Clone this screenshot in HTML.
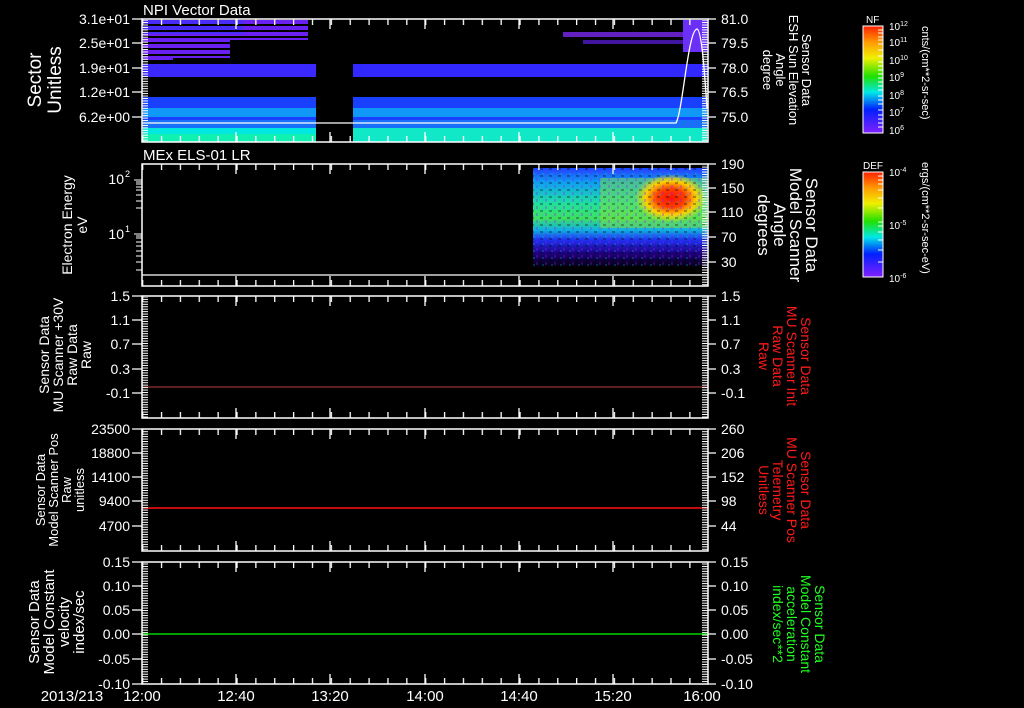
<!DOCTYPE html>
<html><head><meta charset="utf-8"><style>
html,body{margin:0;padding:0;background:#000;}
svg{display:block}
text{font-family:"Liberation Sans",sans-serif;fill:#fff}
.r text{fill:#ff1a1a}
.g text{fill:#20ff20}
</style></head><body>
<svg width="1024" height="708" viewBox="0 0 1024 708" xmlns="http://www.w3.org/2000/svg">
<defs>
<linearGradient id="rb" x1="0" y1="0" x2="0" y2="1">
<stop offset="0" stop-color="#ff2000"/><stop offset="0.15" stop-color="#ff9900"/><stop offset="0.3" stop-color="#f0f000"/><stop offset="0.47" stop-color="#20e000"/><stop offset="0.62" stop-color="#00e8e8"/><stop offset="0.78" stop-color="#0020ff"/><stop offset="1" stop-color="#8020ff"/>
</linearGradient>
<linearGradient id="p2" x1="0" y1="0" x2="0" y2="1">
<stop offset="0" stop-color="#2040ff"/><stop offset="0.15" stop-color="#10a0f0"/><stop offset="0.35" stop-color="#20e0a0"/><stop offset="0.5" stop-color="#40e060"/><stop offset="0.62" stop-color="#10b0e0"/><stop offset="0.72" stop-color="#2030f0"/><stop offset="0.85" stop-color="#200080"/><stop offset="1" stop-color="#000"/>
</linearGradient>
<radialGradient id="hot" cx="0.5" cy="0.5" r="0.5">
<stop offset="0" stop-color="#ff1000"/><stop offset="0.4" stop-color="#ff4000"/><stop offset="0.7" stop-color="#ffd000"/><stop offset="1" stop-color="#ffe000" stop-opacity="0"/>
</radialGradient>
<pattern id="yt" x="0" y="0" width="12" height="2.45" patternUnits="userSpaceOnUse"><rect x="0" y="0" width="12" height="1" fill="#fff"/></pattern>
<pattern id="xt" x="142" y="0" width="18.87" height="10" patternUnits="userSpaceOnUse"><rect x="0" y="0" width="1.3" height="10" fill="#fff"/></pattern>
<pattern id="noise" x="0" y="0" width="9" height="7" patternUnits="userSpaceOnUse"><rect x="0" y="0" width="3" height="2" fill="#000" opacity="0.3"/><rect x="5" y="3" width="2" height="3" fill="#8020ff" opacity="0.3"/><rect x="2" y="5" width="2" height="2" fill="#00c0ff" opacity="0.25"/></pattern>
<pattern id="stripe" x="0" y="20" width="10" height="6" patternUnits="userSpaceOnUse"><rect x="0" y="4" width="10" height="2" fill="#000"/></pattern>
</defs>

<!-- Panel 1 spectrogram -->
<g>
<rect x="143" y="20" width="165" height="38" fill="#6a20f0"/>
<rect x="143" y="20" width="100" height="14" fill="#4a2cf8"/>
<rect x="143" y="20" width="165" height="38" fill="url(#stripe)"/>
<rect x="230" y="40" width="80" height="22" fill="#000"/>
<rect x="143" y="56" width="30" height="4" fill="#6a20f0"/>
<rect x="563" y="32" width="120" height="5" fill="#7a28f0" opacity="0.8"/>
<rect x="583" y="40" width="100" height="4" fill="#5a20e0" opacity="0.7"/>
<rect x="683" y="20" width="24" height="32" fill="#6a30f8"/>
<rect x="143" y="64" width="173" height="13" fill="#3a28ff"/>
<rect x="353" y="64" width="354" height="13" fill="#3028ff"/>
<rect x="143" y="97" width="173" height="45" fill="#1a40ff"/>
<rect x="353" y="97" width="354" height="45" fill="#1a40ff"/>
<rect x="143" y="108" width="173" height="9" fill="#1098f8"/>
<rect x="353" y="108" width="354" height="9" fill="#1098f8"/>
<rect x="143" y="120" width="173" height="8" fill="#1870f8"/>
<rect x="353" y="120" width="354" height="8" fill="#1870f8"/>
<rect x="143" y="128" width="173" height="14" fill="#00e8e0"/>
<rect x="353" y="128" width="354" height="14" fill="#10e8c8"/>
<rect x="143" y="134" width="173" height="8" fill="#10f0b0"/>
<path d="M142 123 L676 123 C683 110 688 30 697 29 C702 30 705 80 707 108" stroke="#fff" stroke-width="1.3" fill="none"/>
</g>

<!-- Panel 2 spectrogram -->
<g>
<rect x="533" y="168" width="174" height="100" fill="url(#p2)"/>
<rect x="600" y="178" width="107" height="50" fill="#80e040" opacity="0.5"/>
<rect x="635" y="174" width="72" height="48" fill="url(#hot)"/>
<rect x="533" y="168" width="174" height="100" fill="url(#noise)"/>
<line x1="142" y1="275" x2="708" y2="275" stroke="#fff" stroke-width="1.3"/>
</g>

<!-- Data lines -->
<line x1="142" y1="387" x2="708" y2="387" stroke="#c04040" stroke-width="1"/>
<line x1="142" y1="508" x2="708" y2="508" stroke="#ff1010" stroke-width="1.5"/>
<line x1="142" y1="634" x2="708" y2="634" stroke="#00ff00" stroke-width="1.3"/>

<!-- Panel frames and ticks -->
<g fill="none" stroke="#fff" stroke-width="1.5">
<rect x="142" y="19" width="566" height="123"/>
<rect x="142" y="164" width="566" height="122"/>
<rect x="142" y="296" width="566" height="122"/>
<rect x="142" y="429" width="566" height="122"/>
<rect x="142" y="562" width="566" height="122"/>
</g>
<rect x="142" y="20" width="6" height="122" fill="url(#yt)"/>
<rect x="702" y="20" width="6" height="122" fill="url(#yt)"/>
<rect x="702" y="165" width="6" height="121" fill="url(#yt)"/>
<rect x="142" y="297" width="6" height="121" fill="url(#yt)"/>
<rect x="702" y="297" width="6" height="121" fill="url(#yt)"/>
<rect x="142" y="430" width="6" height="121" fill="url(#yt)"/>
<rect x="702" y="430" width="6" height="121" fill="url(#yt)"/>
<rect x="142" y="563" width="6" height="121" fill="url(#yt)"/>
<rect x="702" y="563" width="6" height="121" fill="url(#yt)"/>
<g stroke="#fff" stroke-width="1">
<path d="M134 180h8M136 182h6M136 184h6M136 187h6M136 190h6M136 195h6M136 201h6M136 208h6M134 234h8M136 236h6M136 238h6M136 242h6M136 246h6M136 251h6M136 256h6M136 262h6M136 270h6"/>
</g>
<g>
<rect x="142" y="19" width="566" height="6" fill="url(#xt)"/><rect x="142" y="136" width="566" height="6" fill="url(#xt)"/>
<rect x="142" y="164" width="566" height="6" fill="url(#xt)"/><rect x="142" y="280" width="566" height="6" fill="url(#xt)"/>
<rect x="142" y="296" width="566" height="6" fill="url(#xt)"/><rect x="142" y="412" width="566" height="6" fill="url(#xt)"/>
<rect x="142" y="429" width="566" height="6" fill="url(#xt)"/><rect x="142" y="545" width="566" height="6" fill="url(#xt)"/>
<rect x="142" y="562" width="566" height="6" fill="url(#xt)"/><rect x="142" y="678" width="566" height="6" fill="url(#xt)"/>
</g>
<g stroke="#fff" stroke-width="1.3">
<path d="M236 19v10M330 19v10M425 19v10M519 19v10M613 19v10M236 142v-10M330 142v-10M425 142v-10M519 142v-10M613 142v-10
M236 164v10M330 164v10M425 164v10M519 164v10M613 164v10M236 286v-10M330 286v-10M425 286v-10M519 286v-10M613 286v-10
M236 296v10M330 296v10M425 296v10M519 296v10M613 296v10M236 418v-10M330 418v-10M425 418v-10M519 418v-10M613 418v-10
M236 429v10M330 429v10M425 429v10M519 429v10M613 429v10M236 551v-10M330 551v-10M425 551v-10M519 551v-10M613 551v-10
M236 562v10M330 562v10M425 562v10M519 562v10M613 562v10M236 684v-10M330 684v-10M425 684v-10M519 684v-10M613 684v-10
M132 19h10M132 43h10M132 68h10M132 92h10M132 117h10M708 19h8M708 43h8M708 68h8M708 92h8M708 117h8
M708 164h8M708 188h8M708 212h8M708 237h8M708 262h8
M132 296h10M132 320h10M132 344h10M132 369h10M132 393h10M708 296h8M708 320h8M708 344h8M708 369h8M708 393h8
M132 429h10M132 453h10M132 477h10M132 501h10M132 526h10M708 429h8M708 453h8M708 477h8M708 501h8M708 526h8
M132 562h10M132 586h10M132 610h10M132 634h10M132 659h10M132 684h10M708 562h8M708 586h8M708 610h8M708 634h8M708 659h8M708 684h8"/>
</g>

<text x="143" y="15" font-size="15">NPI Vector Data</text>
<text x="143" y="160" font-size="15">MEx ELS-01 LR</text>

<g font-size="14" text-anchor="end">
<text x="130" y="24">3.1e+01</text><text x="130" y="48">2.5e+01</text><text x="130" y="73">1.9e+01</text><text x="130" y="97">1.2e+01</text><text x="130" y="122">6.2e+00</text>
<text x="124" y="184">10</text><text x="130" y="177" font-size="9">2</text>
<text x="124" y="239">10</text><text x="130" y="232" font-size="9">1</text>
<text x="130" y="301">1.5</text><text x="130" y="325">1.1</text><text x="130" y="349">0.7</text><text x="130" y="374">0.3</text><text x="130" y="398">-0.1</text>
<text x="130" y="434">23500</text><text x="130" y="458">18800</text><text x="130" y="482">14100</text><text x="130" y="506">9400</text><text x="130" y="531">4700</text>
<text x="130" y="567">0.15</text><text x="130" y="591">0.10</text><text x="130" y="615">0.05</text><text x="130" y="639">0.00</text><text x="130" y="664">-0.05</text><text x="130" y="689">-0.10</text>
</g>
<g font-size="14">
<text x="721" y="24">81.0</text><text x="721" y="48">79.5</text><text x="721" y="73">78.0</text><text x="721" y="97">76.5</text><text x="721" y="122">75.0</text>
<text x="721" y="169">190</text><text x="721" y="193">150</text><text x="721" y="217">110</text><text x="721" y="242">70</text><text x="721" y="267">30</text>
<text x="721" y="301">1.5</text><text x="721" y="325">1.1</text><text x="721" y="349">0.7</text><text x="721" y="374">0.3</text><text x="721" y="398">-0.1</text>
<text x="721" y="434">260</text><text x="721" y="458">206</text><text x="721" y="482">152</text><text x="721" y="506">98</text><text x="721" y="531">44</text>
<text x="721" y="567">0.15</text><text x="721" y="591">0.10</text><text x="721" y="615">0.05</text><text x="721" y="639">0.00</text><text x="721" y="664">-0.05</text><text x="721" y="689">-0.10</text>
</g>

<g font-size="15" text-anchor="middle">
<text x="72" y="701">2013/213</text>
<text x="142" y="701">12:00</text><text x="236" y="701">12:40</text><text x="330" y="701">13:20</text><text x="425" y="701">14:00</text><text x="519" y="701">14:40</text><text x="613" y="701">15:20</text><text x="702" y="701">16:00</text>
</g>

<g text-anchor="middle">
<g transform="translate(44,80) rotate(-90)" font-size="19"><text x="0" y="-3">Sector</text><text x="0" y="17">Unitless</text></g>
<g transform="translate(72,225) rotate(-90)" font-size="14"><text x="0" y="0">Electron Energy</text><text x="0" y="15">eV</text></g>
<g transform="translate(63,355) rotate(-90)" font-size="14"><text x="0" y="-14">Sensor Data</text><text x="0" y="0">MU Scanner +30V</text><text x="0" y="14">Raw Data</text><text x="0" y="28">Raw</text></g>
<g transform="translate(59,490) rotate(-90)" font-size="13"><text x="0" y="-14">Sensor Data</text><text x="0" y="-1">Model Scanner Pos</text><text x="0" y="12">Raw</text><text x="0" y="25">unitless</text></g>
<g transform="translate(54,622) rotate(-90)" font-size="15"><text x="0" y="-15">Sensor Data</text><text x="0" y="0">Model Constant</text><text x="0" y="15">velocity</text><text x="0" y="30">index/sec</text></g>
</g>
<g text-anchor="middle">
<g transform="translate(790,70) rotate(90)" font-size="13"><text x="0" y="-12">Sensor Data</text><text x="0" y="1">ESH Sun Elevation</text><text x="0" y="14">Angle</text><text x="0" y="27">degree</text></g>
<g transform="translate(790,225) rotate(90)" font-size="17"><text x="0" y="-16">Sensor Data</text><text x="0" y="0">Model Scanner</text><text x="0" y="16">Angle</text><text x="0" y="32">degrees</text></g>
<g class="r" transform="translate(784,356) rotate(90)" font-size="14"><text x="0" y="-17">Sensor Data</text><text x="0" y="-3">MU Scanner Init</text><text x="0" y="11">Raw Data</text><text x="0" y="25">Raw</text></g>
<g class="r" transform="translate(784,490) rotate(90)" font-size="14"><text x="0" y="-17">Sensor Data</text><text x="0" y="-3">MU Scanner Pos</text><text x="0" y="11">Telemetry</text><text x="0" y="25">Unitless</text></g>
<g class="g" transform="translate(798,624) rotate(90)" font-size="14"><text x="0" y="-17">Sensor Data</text><text x="0" y="-3">Model Constant</text><text x="0" y="11">acceleration</text><text x="0" y="25">index/sec**2</text></g>
</g>

<rect x="863" y="26" width="20" height="107" fill="url(#rb)" stroke="#fff" stroke-width="1"/>
<rect x="863" y="172" width="20" height="105" fill="url(#rb)" stroke="#fff" stroke-width="1"/>
<g stroke="#fff" stroke-width="1">
<path d="M878 30h5M878 33h5M878 37h5M878 40h5M878 44h5M878 50h5M878 56h5M878 62h5M878 66h5M878 70h5M878 74h5M878 78h5M878 82h5M878 86h5M878 90h5M878 96h5M878 100h5M878 104h5M878 110h5M878 115h5M878 119h5M878 123h5M878 127h5"/>
<path d="M878 176h5M878 180h5M878 184h5M878 190h5M878 198h5M878 208h5M878 222h5M878 226h5M878 232h5M878 240h5M878 250h5M878 262h5"/>
</g>
<g font-size="10">
<text x="866" y="23">NF</text>
<text x="863" y="169">DEF</text>
<text x="889" y="30">10<tspan dy="-4" font-size="7">12</tspan></text>
<text x="889" y="46">10<tspan dy="-4" font-size="7">11</tspan></text>
<text x="889" y="64">10<tspan dy="-4" font-size="7">10</tspan></text>
<text x="889" y="81">10<tspan dy="-4" font-size="7">9</tspan></text>
<text x="889" y="99">10<tspan dy="-4" font-size="7">8</tspan></text>
<text x="889" y="116">10<tspan dy="-4" font-size="7">7</tspan></text>
<text x="889" y="134">10<tspan dy="-4" font-size="7">6</tspan></text>
<text x="889" y="176">10<tspan dy="-4" font-size="7">-4</tspan></text>
<text x="889" y="229">10<tspan dy="-4" font-size="7">-5</tspan></text>
<text x="889" y="282">10<tspan dy="-4" font-size="7">-6</tspan></text>
</g>
<g font-size="11">
<text transform="translate(922,26) rotate(90)">cnts/(cm**2-sr-sec)</text>
<text transform="translate(922,162) rotate(90)">ergs/(cm**2-sr-sec-eV)</text>
</g>
</svg>
</body></html>
